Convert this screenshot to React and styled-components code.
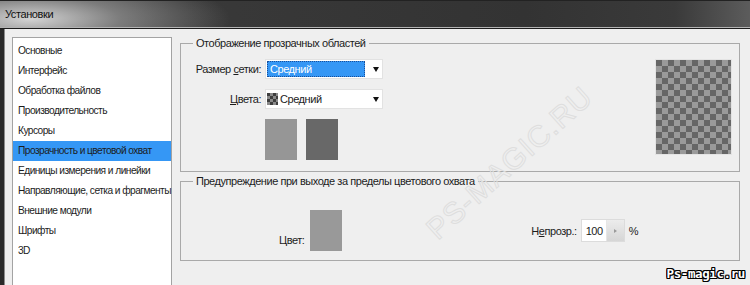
import React from "react";
import styled, { createGlobalStyle } from "styled-components";

const GlobalStyle = createGlobalStyle`
  html, body {
    margin: 0;
    padding: 0;
    background: #efefef;
  }
  body {
    font-family: "Liberation Sans", Arial, sans-serif;
    font-size: 11px;
    letter-spacing: -0.45px;
    color: #1c1c1c;
  }
`;

const Window = styled.div`
  position: relative;
  width: 750px;
  height: 285px;
  overflow: hidden;
  display: flex;
  flex-direction: column;
`;

const TitleBar = styled.div`
  height: 26px;
  flex: none;
  display: flex;
  align-items: center;
  padding-left: 5px;
  color: #111;
  font-size: 11px;
  letter-spacing: -0.4px;
  background:
    radial-gradient(ellipse 200px 48px at 30px 18px, rgba(220, 220, 220, 0.95) 0, rgba(160, 160, 160, 0.65) 45%, rgba(60, 60, 60, 0) 100%),
    linear-gradient(to right, #3c3c3c 0, #333 70%, #3a3a3a 90%, #5c5c5c 100%);
  border-top: 1px solid #222;
  border-bottom: 1px solid #b4b4b4;
  box-shadow: 0 1px 0 #1d1d1d;
`;

const Body = styled.div`
  flex: 1;
  display: flex;
  gap: 8px;
  margin-top: 1px;
  padding: 8px 10px 0 8px;
  border-left: 4px solid #2a2a2a;
  box-shadow: inset 1px 0 0 #8c8c8c;
  min-height: 0;
`;

const Sidebar = styled.ul`
  list-style: none;
  margin: 0;
  padding: 3px 0 0;
  width: 158px;
  flex: none;
  background: #fff;
  border: 1px solid #a3a3a3;
  border-bottom: none;
  font-size: 10.2px;
  letter-spacing: -0.55px;
`;

const NavItem = styled.li`
  height: 20px;
  line-height: 20px;
  padding-left: 5px;
  white-space: nowrap;
  background: ${(p) => (p.$active ? "#3597f5" : "transparent")};
`;

const Content = styled.div`
  flex: 1;
  display: flex;
  flex-direction: column;
  gap: 3px;
`;

const Group = styled.fieldset`
  margin: 0;
  padding: ${(p) => p.$pad};
  border: 1px solid #a9a9a9;
  height: ${(p) => p.$h};
  box-sizing: border-box;
  min-width: 0;
`;

const Legend = styled.legend`
  margin-left: 12px;
  padding: 0 3px;
  line-height: 13px;
`;

const Split = styled.div`
  display: flex;
  justify-content: space-between;
`;

const Form = styled.div`
  display: grid;
  grid-template-columns: 80px 118px;
  column-gap: 4px;
  row-gap: 10px;
  align-items: center;
`;

const Label = styled.label`
  text-align: right;
  white-space: nowrap;
  padding-top: ${(p) => p.$drop || 0};
  u {
    text-decoration: underline;
    text-underline-offset: 1px;
  }
`;

const Select = styled.div`
  height: 20px;
  box-sizing: border-box;
  background: #fff;
  border: 1px solid #e2e2e2;
  display: flex;
  align-items: center;
  padding: 1px 0 1px 1px;
`;

const SelectValue = styled.div`
  flex: 1;
  height: 100%;
  display: flex;
  align-items: center;
  gap: 2px;
  padding-left: ${(p) => (p.$focused ? "3px" : "0")};
  margin-right: 8px;
  background: ${(p) => (p.$focused ? "#3597f5" : "transparent")};
  color: ${(p) => (p.$focused ? "#fff" : "#1c1c1c")};
  outline: ${(p) => (p.$focused ? "1px dotted #1a4f9a" : "none")};
  outline-offset: -1px;
`;

const Arrow = styled.span`
  width: 0;
  height: 0;
  margin-right: 3px;
  border-left: 3.5px solid transparent;
  border-right: 3.5px solid transparent;
  border-top: 5px solid #111;
`;

const MiniChecker = styled.span`
  width: 11px;
  height: 12px;
  flex: none;
  background: repeating-conic-gradient(#8a8a8a 0 25%, #3e3e3e 0 50%) 0 0 / 6px 6px;
`;

const Swatches = styled.div`
  grid-column: 2;
  display: flex;
  gap: 9px;
`;

const Swatch = styled.div`
  width: 32px;
  height: 41px;
  background: ${(p) => p.$color};
`;

const Checker = styled.div`
  width: 75px;
  height: 94px;
  margin: 1px 8px 0 0;
  background: repeating-conic-gradient(#9a9a9a 0 25%, #666 0 50%) 0 0 / 12px 12px;
  box-shadow: 0 0 0 1px #e4e4e4;
`;

const WarnRow = styled.div`
  display: flex;
  align-items: center;
`;

const ColorField = styled.div`
  display: flex;
  align-items: center;
  gap: 6px;
  margin-left: 98px;
`;

const OpacityField = styled.div`
  display: flex;
  align-items: center;
  gap: 4px;
  margin-left: auto;
  margin-right: 101px;
`;

const NumberBox = styled.div`
  display: flex;
  height: 23px;
  box-sizing: border-box;
  border: 1px solid #dcdcdc;
  background: #fff;
`;

const NumberValue = styled.span`
  width: 20px;
  padding-left: 4px;
  display: flex;
  align-items: center;
`;

const Spin = styled.span`
  width: 17px;
  display: flex;
  align-items: center;
  justify-content: center;
  background: linear-gradient(#ececec, #d6d6d6);
  border-left: 1px solid #e6e6e6;
  &::after {
    content: "";
    border-top: 2.5px solid transparent;
    border-bottom: 2.5px solid transparent;
    border-left: 3px solid #9a9a9a;
  }
`;

const Watermark = styled.div`
  position: absolute;
  left: 404px;
  top: 146px;
  transform: rotate(-42deg);
  transform-origin: center;
  font-size: 30px;
  letter-spacing: 1px;
  color: transparent;
  -webkit-text-stroke: 1px #dedede;
  white-space: nowrap;
  pointer-events: none;
`;

const Logo = styled.div`
  position: absolute;
  right: 5px;
  bottom: 4px;
  font-family: "DejaVu Sans Mono", monospace;
  font-weight: bold;
  font-size: 12.5px;
  letter-spacing: -0.4px;
  color: #fff;
  text-shadow:
    1px 0 0 #000, -1px 0 0 #000, 0 1px 0 #000, 0 -1px 0 #000,
    1px 1px 0 #000, -1px -1px 0 #000, 1px -1px 0 #000, -1px 1px 0 #000;
`;

const navItems = [
  "Основные",
  "Интерфейс",
  "Обработка файлов",
  "Производительность",
  "Курсоры",
  "Прозрачность и цветовой охват",
  "Единицы измерения и линейки",
  "Направляющие, сетка и фрагменты",
  "Внешние модули",
  "Шрифты",
  "3D",
];

export default function App() {
  return (
    <Window>
      <GlobalStyle />
      <TitleBar>Установки</TitleBar>
      <Body>
        <Sidebar>
          {navItems.map((item, i) => (
            <NavItem key={item} $active={i === 5}>
              {item}
            </NavItem>
          ))}
        </Sidebar>
        <Content>
          <Group $pad="9px 0 9px 0" $h="135px">
            <Legend>Отображение прозрачных областей</Legend>
            <Split>
              <Form>
                <Label>
                  Размер <u>с</u>етки:
                </Label>
                <Select>
                  <SelectValue $focused>Средний</SelectValue>
                  <Arrow />
                </Select>
                <Label>
                  <u>Ц</u>вета:
                </Label>
                <Select>
                  <SelectValue>
                    <MiniChecker />
                    Средний
                  </SelectValue>
                  <Arrow />
                </Select>
                <Swatches>
                  <Swatch $color="#969696" />
                  <Swatch $color="#686868" />
                </Swatches>
              </Form>
              <Checker />
            </Split>
          </Group>
          <Group $pad="22px 0 0 0" $h="86px">
            <Legend>Предупреждение при выходе за пределы цветового охвата</Legend>
            <WarnRow>
              <ColorField>
                <Label $drop="18px">Цвет:</Label>
                <Swatch $color="#999" />
              </ColorField>
              <OpacityField>
                <Label>
                  Н<u>е</u>прозр.:
                </Label>
                <NumberBox>
                  <NumberValue>100</NumberValue>
                  <Spin />
                </NumberBox>
                <span>%</span>
              </OpacityField>
            </WarnRow>
          </Group>
        </Content>
      </Body>
      <Watermark>PS-MAGIC.RU</Watermark>
      <Logo>Ps-magic.ru</Logo>
    </Window>
  );
}
